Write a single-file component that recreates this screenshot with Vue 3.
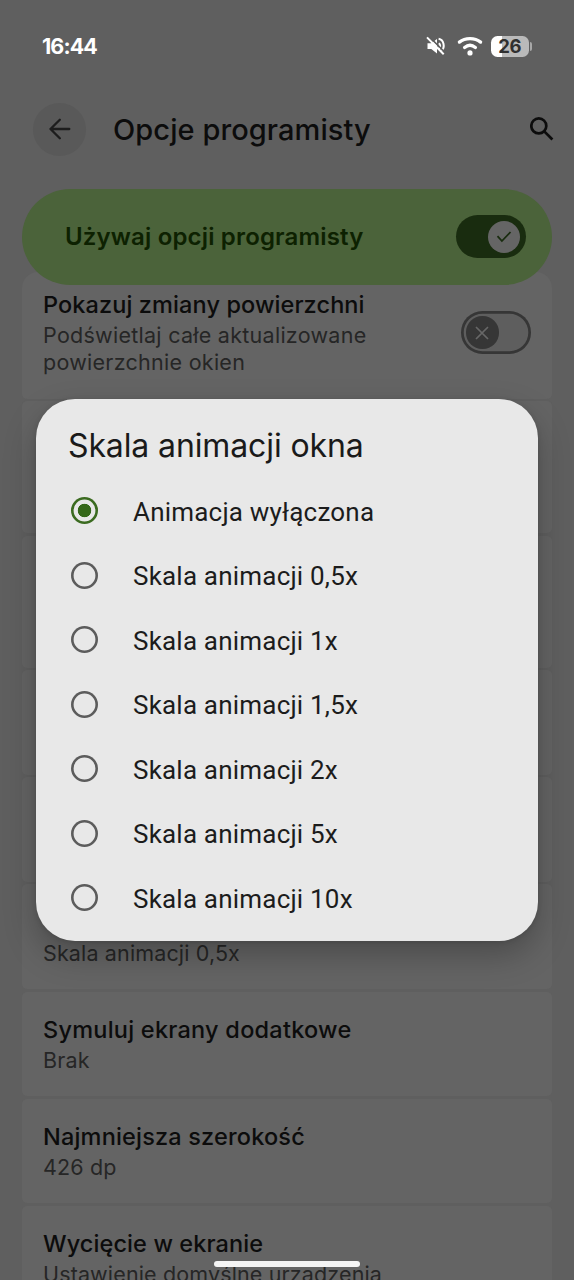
<script setup>
import { ref } from 'vue'

const options = [
  'Animacja wyłączona',
  'Skala animacji 0,5x',
  'Skala animacji 1x',
  'Skala animacji 1,5x',
  'Skala animacji 2x',
  'Skala animacji 5x',
  'Skala animacji 10x',
]
const selected = ref(0)
const entries = [
  { title: 'Symuluj ekrany dodatkowe', value: 'Brak', cls: 't-displays' },
  { title: 'Najmniejsza szerokość', value: '426 dp', cls: 't-width' },
  { title: 'Wycięcie w ekranie', value: 'Ustawienie domyślne urządzenia', cls: 't-cutout' },
]
</script>

<template>
  <div class="screen">
    <header class="status">
      <span class="clock">16:44</span>
      <div class="status-icons">
        <svg class="mute" width="20" height="20" viewBox="0 0 20 20" fill="none">
          <path d="M1.500 7.200h3.800L11 3v14.500l-5.700-4.500H1.500z" fill="#fff" />
          <path d="M13 7.200c1.300 1.600 1.300 4 0 5.600M12.600 2.800c5.200 1 6.800 8.200 3 12" stroke="#fff" stroke-width="2" />
          <path d="M2.700.2 20 17.500" stroke="#5f5f5f" stroke-width="1.600" />
          <path d="M1 1.400 17.700 18.200" stroke="#fff" stroke-width="2" />
        </svg>
        <svg class="wifi" width="26" height="20" viewBox="0 0 26 20" fill="none" stroke="#fff" stroke-width="3.300" stroke-linecap="round">
          <path d="M2.400 6.100C8.200 1.400 17.800 1.400 23.600 6.100" />
          <path d="M7.600 11.500c3.300-2.700 7.500-2.700 10.800 0" />
          <circle cx="13" cy="16.900" r="2.600" fill="#fff" stroke="none" />
        </svg>
        <div class="battery"><span>26</span></div>
        <i class="nub"></i>
      </div>
    </header>

    <div class="appbar">
      <button class="back" aria-label="Wstecz">
        <svg width="22" height="22" viewBox="0 0 22 22" fill="none" stroke="#1d1d1d" stroke-width="2.300" stroke-linecap="round" stroke-linejoin="round">
          <path d="M20.300 11H1.500M10.800 1.700 1.500 11l9.300 9.300" />
        </svg>
      </button>
      <h1>Opcje programisty</h1>
      <svg class="search" width="24" height="24" viewBox="0 0 24 24" fill="none" stroke="#0c0c0c" stroke-width="2.700">
        <circle cx="8.800" cy="8.900" r="7.500" />
        <path d="m14 14.100 8.400 8.400" />
      </svg>
    </div>

    <div class="master">
      <span>Używaj opcji programisty</span>
      <div class="switch on">
        <div class="knob">
          <svg width="16" height="14" viewBox="0 0 16 14" fill="none" stroke="#192c0f" stroke-width="1.800"><path d="m1.500 6.200 4.400 4.800 8.600-9" /></svg>
        </div>
      </div>
    </div>

    <main class="list">
      <section class="card surface">
        <div>
          <h2 class="t-surface">Pokazuj zmiany powierzchni</h2>
          <p>Podświetlaj całe aktualizowane<br />powierzchnie okien</p>
        </div>
        <div class="switch off">
          <div class="knob">
            <svg width="14" height="14" viewBox="0 0 14 14" fill="none" stroke="#676767" stroke-width="1.700"><path d="m1 1 12 12M13 1 1 13" /></svg>
          </div>
        </div>
      </section>
      <section class="card tall"></section>
      <section class="card tall"></section>
      <section class="card"></section>
      <section class="card"></section>
      <section class="card scale"><p>Skala animacji 0,5x</p></section>
      <section v-for="e in entries" :key="e.title" class="card">
        <h2 :class="e.cls">{{ e.title }}</h2>
        <p>{{ e.value }}</p>
      </section>
    </main>

    <div class="dialog" role="dialog">
      <h3>Skala animacji okna</h3>
      <div v-for="(o, i) in options" :key="o" class="option" @click="selected = i">
        <span class="radio" :class="{ checked: i === selected }"></span>
        <span class="label">{{ o }}</span>
      </div>
    </div>
    <div class="homebar"></div>
  </div>
</template>

<style>
html, body { background: #5f5f5f; overflow: hidden; }
</style>

<style scoped>
.screen {
  position: relative;
  width: 574px;
  height: 1280px;
  overflow: hidden;
  background: #5f5f5f;
  font-family: Inter, "Noto Sans", sans-serif;
  color: #0c0c0c;
}
h1, h2, h3, p { margin: 0; white-space: nowrap; }
.status {
  height: 92px;
  padding: 0 42px;
  display: flex;
  align-items: center;
  justify-content: space-between;
}
.clock { color: #fff; font-size: 21.500px; font-weight: 700; letter-spacing: -0.900px; }
.status-icons { display: flex; align-items: center; }
.wifi { margin-left: 11px; }
.battery {
  width: 37.500px;
  height: 21px;
  margin-left: 8px;
  border-radius: 6.500px;
  background: linear-gradient(90deg, #fff 29%, #bababa 29%);
  display: flex;
  align-items: center;
  justify-content: center;
  color: #303030;
  font-size: 18.500px;
  font-weight: 700;
  letter-spacing: -0.400px;
}
.nub { width: 2.500px; height: 9px; margin-left: 1px; background: #a8a8a8; border-radius: 0 2px 2px 0; }
.appbar {
  height: 74px;
  padding: 0 20.500px 0 33px;
  display: flex;
  align-items: center;
}
.back {
  width: 53px;
  height: 53px;
  padding: 0;
  border: 0;
  border-radius: 50%;
  background: #595959;
  display: flex;
  align-items: center;
  justify-content: center;
}
h1 { margin-left: 27px; font-size: 29px; font-weight: 450; letter-spacing: 0.080px; flex: 1; }
.master {
  position: relative;
  z-index: 1;
  height: 96.500px;
  margin: 22.500px 22px 0;
  padding: 0 26.500px 0 43px;
  border-radius: 49px;
  background: #4b633a;
  color: #0d2101;
  font-size: 24px;
  font-weight: 600;
  letter-spacing: 0.160px;
  display: flex;
  align-items: center;
  justify-content: space-between;
}
.switch {
  box-sizing: border-box;
  width: 70px;
  height: 43px;
  border-radius: 22px;
  display: flex;
  align-items: center;
}
.switch.on { background: #192c0f; justify-content: flex-end; padding-right: 5.500px; }
.switch.off { box-shadow: inset 0 0 0 2.700px #363636; background: #5e5e5e; padding-left: 5px; }
.knob {
  width: 32.500px;
  height: 32.500px;
  border-radius: 50%;
  background: #656565;
  display: flex;
  align-items: center;
  justify-content: center;
}
.off .knob { background: #363636; }
.list {
  margin: -13px 22px 0;
  display: flex;
  flex-direction: column;
  gap: 2.600px;
}
.card {
  box-sizing: border-box;
  flex: none;
  height: 104.500px;
  padding: 22.500px 21px 0;
  border-radius: 5px;
  background: #646464;
}
.card.tall { height: 132px; }
.card.surface {
  height: 126.500px;
  padding-top: 17px;
  border-radius: 16px 16px 5px 5px;
  display: flex;
  justify-content: space-between;
}
.card.scale { padding-top: 55px; }
.surface .switch { margin-top: 22px; }
h2 { font-size: 23.500px; line-height: 32px; font-weight: 500; letter-spacing: 0.100px; }
.t-displays { letter-spacing: 0.240px; }
.t-width { letter-spacing: 0.180px; }
p { font-size: 21.500px; line-height: 27.500px; color: #262626; letter-spacing: 0.140px; padding-top: 0.600px; }
.surface p { letter-spacing: 0.270px; }
.dialog {
  position: absolute;
  left: 36px;
  top: 399px;
  box-sizing: border-box;
  width: 502px;
  height: 542px;
  border-radius: 39px;
  background: #e8e8e8;
  box-shadow: 0 14px 32px rgba(0, 0, 0, 0.250), 0 1px 5px rgba(0, 0, 0, 0.120);
}
h3 {
  height: 79.500px;
  padding: 0 32px;
  line-height: 94px;
  font-size: 32px;
  font-weight: 400;
  letter-spacing: -0.120px;
  color: #1a1a1a;
}
.option {
  height: 64.500px;
  padding-left: 35px;
  display: flex;
  align-items: center;
}
.radio {
  width: 27px;
  height: 27px;
  box-shadow: inset 0 0 0 2.600px #5c5c5c;
  border-radius: 50%;
}
.radio.checked {
  box-shadow: inset 0 0 0 2.600px #3b6b20;
  background: radial-gradient(circle, #35681a 6.400px, transparent 7.100px);
}
.label { margin-left: 35px; font: 400 26px/30px Roboto, sans-serif; letter-spacing: 0.200px; color: #1c1c1c; padding-top: 2px; }
.homebar {
  position: absolute;
  left: 214px;
  top: 1261px;
  width: 146px;
  height: 6px;
  border-radius: 3px;
  background: #f4f4f4;
}
</style>
